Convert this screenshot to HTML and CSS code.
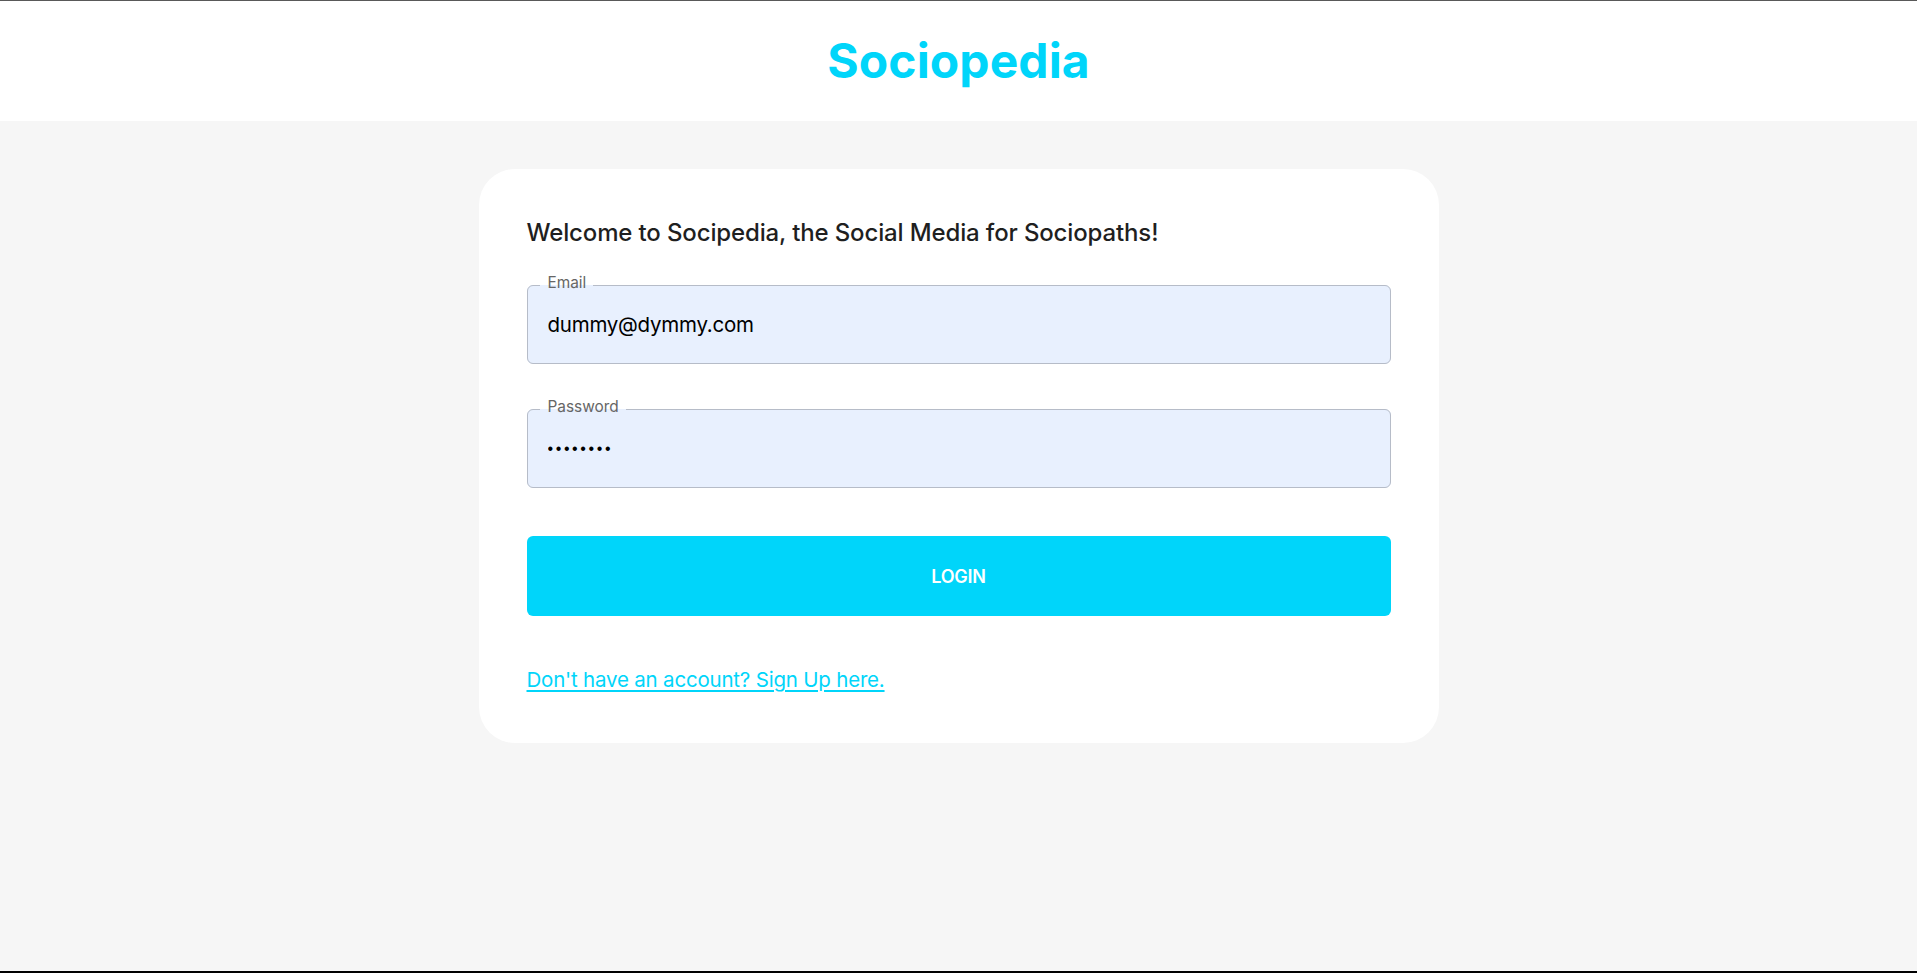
FILE: index.html
```html
<!DOCTYPE html>
<html lang="en">
<head>
<meta charset="utf-8">
<title>Sociopedia</title>
<link rel="stylesheet" href="styles.css">
</head>
<body>
  <header class="topbar">
    <h1 class="brand">Sociopedia</h1>
  </header>
  <main class="card">
    <h2 class="welcome">Welcome to Socipedia, the Social Media for Sociopaths!</h2>
    <form class="form">
      <div class="field">
        <label class="field-label">Email</label>
        <input class="field-input" type="text" value="dummy@dymmy.com">
        <fieldset class="field-outline"><legend><span>Email</span></legend></fieldset>
      </div>
      <div class="field">
        <label class="field-label">Password</label>
        <input class="field-input password" type="password" value="dummyabc">
        <fieldset class="field-outline"><legend><span>Password</span></legend></fieldset>
      </div>
      <button class="login" type="button">Login</button>
      <a class="switch" href="#">Don't have an account? Sign Up here.</a>
    </form>
  </main>
</body>
</html>
```

FILE: styles.css
```css
* { box-sizing: border-box; }

html, body { height: 100%; }

body {
  margin: 0;
  min-height: 100vh;
  background: #f6f6f6;
  border-top: 1px solid #595959;
  border-bottom: 2px solid #000;
  font-family: "Inter", "Noto Sans", sans-serif;
  color: #1f1f1f;
}

.topbar {
  background: #ffffff;
  padding: 24px 6%;
  text-align: center;
}

.brand {
  margin: 0;
  font-size: 48px;
  line-height: 72px;
  font-weight: 700;
  color: #00d5fa;
  letter-spacing: 0.1px;
}

.card {
  width: 960px;
  margin: 48px auto;
  padding: 48px;
  background: #ffffff;
  border-radius: 36px;
}

.welcome {
  margin: 0 0 36px;
  font-size: 24px;
  line-height: 32px;
  font-weight: 500;
  color: #1f1f1f;
  letter-spacing: -0.14px;
}

.form {
  display: flex;
  flex-direction: column;
}

.field {
  position: relative;
  border-radius: 6px;
  margin-bottom: 45px;
}

.field:nth-of-type(2) { margin-bottom: 0; }

.field-input {
  display: block;
  width: 100%;
  margin: 0;
  border: 0;
  outline: none;
  padding: 24.75px 21px;
  height: 79px;
  font-family: inherit;
  font-size: 20.5px;
  line-height: 29.5px;
  letter-spacing: -0.25px;
  color: #000;
  background: #e8f0fe;
  border-radius: 6px;
}

.field-input.password {
  font-family: "Liberation Sans", sans-serif;
  font-size: 16px;
  letter-spacing: 2.6px;
}

.field-label {
  position: absolute;
  left: 21px;
  top: -13px;
  font-size: 15.4px;
  line-height: 22px;
  color: #666666;
  z-index: 1;
  pointer-events: none;
}

.field-outline {
  position: absolute;
  top: -7.5px;
  right: 0;
  bottom: 0;
  left: 0;
  margin: 0;
  padding: 0 12px;
  border: 1px solid #b6bcc8;
  border-radius: 6px;
  pointer-events: none;
  min-width: 0;
}

.field-outline legend {
  display: block;
  width: auto;
  height: 16.5px;
  padding: 0;
  font-size: 15.4px;
  visibility: hidden;
  white-space: nowrap;
  max-width: 100%;
  overflow: hidden;
}

.field-outline legend span {
  display: inline-block;
  padding: 0 7.5px;
  opacity: 0;
}

.login {
  margin: 48px 0;
  height: 80px;
  border: 0;
  border-radius: 6px;
  background: #00d5fa;
  color: #ffffff;
  font-family: inherit;
  font-size: 18px;
  font-weight: 600;
  letter-spacing: -0.2px;
  text-transform: uppercase;
  cursor: pointer;
}

.switch {
  align-self: flex-start;
  font-size: 20.5px;
  line-height: 31px;
  letter-spacing: -0.2px;
  color: #00d5fa;
  text-decoration: underline;
  text-underline-offset: 3px;
}
```
